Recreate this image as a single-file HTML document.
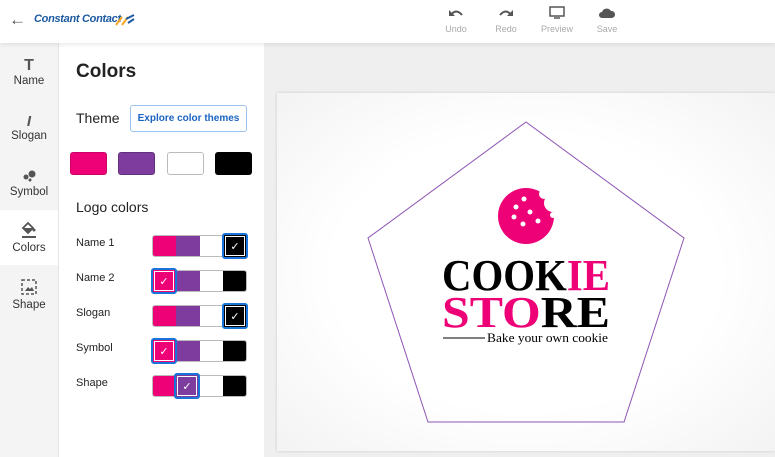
<!DOCTYPE html>
<html><head><style>
*{margin:0;padding:0;box-sizing:border-box}
body{width:775px;height:457px;overflow:hidden;font-family:"Liberation Sans",sans-serif;background:#efefef;position:relative}
.hdr{position:absolute;left:0;top:0;width:775px;height:43px;background:#fff;box-shadow:0 2px 4px rgba(0,0,0,.08);z-index:2}
.nav{position:absolute;left:0;top:43px;width:59px;height:414px;background:#f4f4f4;border-right:1px solid #e4e4e4}
.ni{position:absolute;left:0;width:58px;text-align:center;font-size:11.5px;color:#333}
.panel{position:absolute;left:59px;top:43px;width:205px;height:414px;background:#fff}
.t{position:absolute;color:#222}
.sw{position:absolute;height:23px;border-radius:3px}
.row{position:absolute;left:152px;width:95px;height:22px;border-radius:3px;overflow:hidden;display:flex;border:1px solid #bbb}
.row div{flex:1}
.sel{position:absolute;width:26px;height:26px;border:2px solid #1a73d9;border-radius:3px;display:flex;align-items:center;justify-content:center;color:#fff;font-size:11px}
.sel span{display:block;width:20px;height:20px;border:1px solid #fff;display:flex;align-items:center;justify-content:center}
.tb{position:absolute;top:0;text-align:center;font-size:9px;color:#aaa;width:40px}
.tb div{margin-top:3px}
</style></head><body>
<div class="hdr">
 <div style="position:absolute;left:9px;top:10px;font-size:17px;color:#555">&#8592;</div>
 <div style="position:absolute;left:34px;top:13px;font-size:11px;font-style:italic;font-weight:bold;color:#1e5aa0;letter-spacing:-.3px">Constant Contact</div>
 <svg style="position:absolute;left:114px;top:13px" width="22" height="14"><path d="M2 12l6-8M8 12l6-8" stroke="#f5a623" stroke-width="2"/><path d="M12 6l8-4M14 10l6-4" stroke="#1e5aa0" stroke-width="2"/></svg>
 <div class="tb" style="left:436px"><svg width="16" height="12" style="margin-top:7px"><path d="M3 8 Q8 1 14 8" stroke="#555" stroke-width="2" fill="none"/><path d="M1 3v6h6z" fill="#555"/></svg><div>Undo</div></div>
 <div class="tb" style="left:486px"><svg width="16" height="12" style="margin-top:7px"><path d="M2 8 Q8 1 13 8" stroke="#555" stroke-width="2" fill="none"/><path d="M15 3v6h-6z" fill="#555"/></svg><div>Redo</div></div>
 <div class="tb" style="left:537px"><svg width="16" height="13" style="margin-top:6px"><rect x="1" y="1" width="14" height="9" fill="none" stroke="#555" stroke-width="1.5"/><path d="M5 12h6" stroke="#555" stroke-width="1.5"/></svg><div>Preview</div></div>
 <div class="tb" style="left:587px"><svg width="18" height="12" style="margin-top:7px"><path d="M4 11a3 3 0 0 1 0-6a5 5 0 0 1 9-1a3.5 3.5 0 0 1 1 7z" fill="#555"/></svg><div>Save</div></div>
</div>
<div class="nav">
 <div class="ni" style="top:14px"><div style="font-weight:bold;font-size:16px;color:#555">T</div>Name</div>
 <div class="ni" style="top:70px"><div style="font-weight:bold;font-style:italic;font-size:15px;color:#555">I</div>Slogan</div>
 <div class="ni" style="top:124px"><svg width="16" height="16"><circle cx="5" cy="10" r="2.5" fill="#555"/><circle cx="11" cy="7" r="3.5" fill="#555"/><circle cx="9" cy="13" r="1.5" fill="#555"/></svg><div>Symbol</div></div>
 <div class="ni" style="top:167px;height:55px;background:#fff;padding-top:9px"><svg width="18" height="20"><path d="M3 9l5-5 5 5-5 5z" fill="none" stroke="#555" stroke-width="1.8"/><path d="M3 9h10l-5 5z" fill="#555"/><circle cx="14" cy="11" r="1.5" fill="#555"/><rect x="2" y="17" width="14" height="2" fill="#555"/></svg><div>Colors</div></div>
 <div class="ni" style="top:235px"><svg width="16" height="18"><rect x="1" y="2" width="14" height="14" fill="none" stroke="#555" stroke-dasharray="3 2" stroke-width="1.5"/><path d="M4 13l3-4 2 2 2-2 2 4z" fill="#555"/></svg><div>Shape</div></div>
</div>
<div class="panel"></div>
<div class="t" style="left:76px;top:61px;font-size:19px;font-weight:bold">Colors</div>
<div class="t" style="left:76px;top:110px;font-size:14px">Theme</div>
<div style="position:absolute;left:130px;top:105px;width:117px;height:27px;border:1px solid #9cc4ee;border-radius:3px;font-size:10px;font-weight:bold;color:#1a63c1;text-align:center;line-height:25px">Explore color themes</div>
<div class="sw" style="left:70px;top:152px;width:37px;background:#ee0077;border:1px solid #c06"></div>
<div class="sw" style="left:118px;top:152px;width:37px;background:#7e3d9e;border:1px solid #63307c"></div>
<div class="sw" style="left:167px;top:152px;width:37px;background:#fff;border:1px solid #bbb"></div>
<div class="sw" style="left:215px;top:152px;width:37px;background:#000"></div>
<div class="t" style="left:76px;top:199px;font-size:14px">Logo colors</div>
<div class="t" style="left:76px;top:237px;font-size:11px">Name 1</div>
<div class="t" style="left:76px;top:272px;font-size:11px">Name 2</div>
<div class="t" style="left:76px;top:307px;font-size:11px">Slogan</div>
<div class="t" style="left:76px;top:342px;font-size:11px">Symbol</div>
<div class="t" style="left:76px;top:377px;font-size:11px">Shape</div>
<div class="row" style="top:235px"><div style="background:#ee0077"></div><div style="background:#7e3d9e"></div><div style="background:#fff"></div><div style="background:#000"></div></div>
<div class="row" style="top:270px"><div style="background:#ee0077"></div><div style="background:#7e3d9e"></div><div style="background:#fff"></div><div style="background:#000"></div></div>
<div class="row" style="top:305px"><div style="background:#ee0077"></div><div style="background:#7e3d9e"></div><div style="background:#fff"></div><div style="background:#000"></div></div>
<div class="row" style="top:340px"><div style="background:#ee0077"></div><div style="background:#7e3d9e"></div><div style="background:#fff"></div><div style="background:#000"></div></div>
<div class="row" style="top:375px"><div style="background:#ee0077"></div><div style="background:#7e3d9e"></div><div style="background:#fff"></div><div style="background:#000"></div></div>
<div class="sel" style="left:222px;top:233px;background:#000"><span>✓</span></div>
<div class="sel" style="left:151px;top:268px;background:#ee0077"><span>✓</span></div>
<div class="sel" style="left:222px;top:303px;background:#000"><span>✓</span></div>
<div class="sel" style="left:151px;top:338px;background:#ee0077"><span>✓</span></div>
<div class="sel" style="left:174px;top:373px;background:#7e3d9e"><span>✓</span></div>
<div style="position:absolute;left:277px;top:93px;width:498px;height:358px;background:radial-gradient(ellipse at center,#fff 55%,#f3f3f3 100%);box-shadow:0 0 3px rgba(0,0,0,.15)"></div>
<svg style="position:absolute;left:0;top:0" width="775" height="457">
 <polygon points="526,122 684,238 624,422 428,422 368,238" fill="none" stroke="#8e55b5" stroke-width="1"/>
 <circle cx="526" cy="216" r="28" fill="#ee0077"/>
 <circle cx="553" cy="203" r="9" fill="#fff"/>
 <circle cx="544" cy="194" r="5" fill="#fff"/>
 <circle cx="553" cy="215" r="3" fill="#fff"/>
 <g fill="#fff"><circle cx="524" cy="199" r="2.5"/><circle cx="516" cy="207" r="2.5"/><circle cx="530" cy="212" r="2.5"/><circle cx="514" cy="217" r="2.5"/><circle cx="538" cy="221" r="2.5"/><circle cx="523" cy="224" r="2.5"/></g>
 <text x="442" y="290" font-family="Liberation Serif,serif" font-weight="bold" font-size="44" fill="#000" textLength="168" lengthAdjust="spacingAndGlyphs">COOK<tspan fill="#ee0077">IE</tspan></text>
 <text x="442" y="327" font-family="Liberation Serif,serif" font-weight="bold" font-size="44" fill="#ee0077" textLength="168" lengthAdjust="spacingAndGlyphs">STO<tspan fill="#000">RE</tspan></text>
 <line x1="443" y1="338" x2="485" y2="338" stroke="#000" stroke-width="1"/>
 <text x="487" y="342" font-family="Liberation Serif,serif" font-size="13" fill="#000" textLength="121" lengthAdjust="spacingAndGlyphs">Bake your own cookie</text>
</svg>
</body></html>
